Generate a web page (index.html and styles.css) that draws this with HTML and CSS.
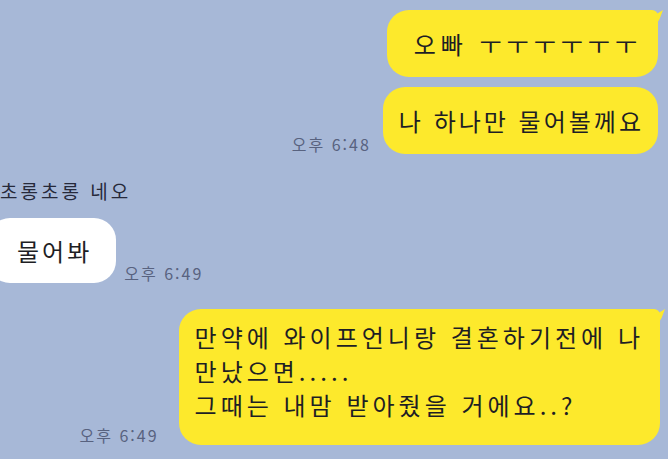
FILE: index.html
```html
<!DOCTYPE html>
<html lang="ko">
<head>
    <meta charset="UTF-8">
    <meta name="viewport" content="width=device-width, initial-scale=1.0">
    <title>Chat</title>
    <link rel="stylesheet" href="styles.css">
</head>
<body>

<!-- Chat room -->
<div class="chat">

    <!-- Sent messages -->
    <div class="row row-me first">
        <div class="bubble bubble-me bubble-cry tail">오빠 ㅜㅜㅜㅜㅜㅜ</div>
    </div>
    <div class="row row-me second">
        <span class="time">오후 6:48</span>
        <div class="bubble bubble-me">나 하나만 물어볼께요</div>
    </div>

    <!-- Received message -->
    <div class="sender">초롱초롱 네오</div>
    <div class="row row-other">
        <div class="bubble bubble-other">물어봐</div>
        <span class="time">오후 6:49</span>
    </div>

    <!-- Sent message -->
    <div class="row row-me long-row">
        <span class="time">오후 6:49</span>
        <div class="bubble bubble-me bubble-long tail">만약에 와이프언니랑 결혼하기전에 나<br>만났으면.....<br>그때는 내맘 받아줬을 거에요..?</div>
    </div>

</div>

</body>
</html>
```

FILE: styles.css
```css
/* Global Styles */
* {
    margin: 0;
    padding: 0;
    box-sizing: border-box;
}

body {
    font-family: "Noto Sans CJK KR", "Noto Sans", sans-serif;
    background-color: #a7b8d7;
    color: #1e1e24;
    overflow: hidden;
}

/* Chat */
.chat {
    display: flex;
    flex-direction: column;
    padding-top: 10px;
    width: 668px;
    height: 459px;
}

.row {
    display: flex;
    align-items: flex-end;
    gap: 12px;
}

.row-me {
    justify-content: flex-end;
    padding-right: 10px;
}

.row-me.second {
    margin-top: 10px;
}

.row-me.long-row {
    margin-top: 26px;
    padding-right: 8px;
    gap: 20px;
}

.row-other {
    margin-top: 15px;
    margin-left: -12px;
    gap: 8px;
}

/* Bubbles */
.bubble {
    position: relative;
    font-size: 24px;
    letter-spacing: 3px;
    line-height: 33px;
    padding: 17px 14px 17px 16px;
    border-radius: 22px;
    white-space: nowrap;
}

.bubble-me {
    background-color: #fde92c;
}

.bubble-cry {
    letter-spacing: 5px;
    padding: 17px 16px 17px 27px;
}

.bubble-other {
    background-color: #ffffff;
    padding: 16px 24px 16px 29px;
}

.bubble-long {
    letter-spacing: 4px;
    line-height: 34px;
    padding: 11px 16px 23px 16px;
}

.tail {
    border-top-right-radius: 6px;
}

.tail::after {
    content: "";
    position: absolute;
    top: 0;
    right: -5px;
    width: 16px;
    height: 14px;
    background-color: #fde92c;
    clip-path: polygon(0 30%, 65% 25%, 100% 0, 80% 60%, 60% 100%, 0 100%);
}

/* Meta */
.time {
    font-size: 16px;
    letter-spacing: 2px;
    line-height: 20px;
    color: #58627f;
    white-space: nowrap;
}

.sender {
    margin-top: 25px;
    font-size: 19px;
    letter-spacing: 3px;
    line-height: 24px;
    color: #26293a;
}
```
